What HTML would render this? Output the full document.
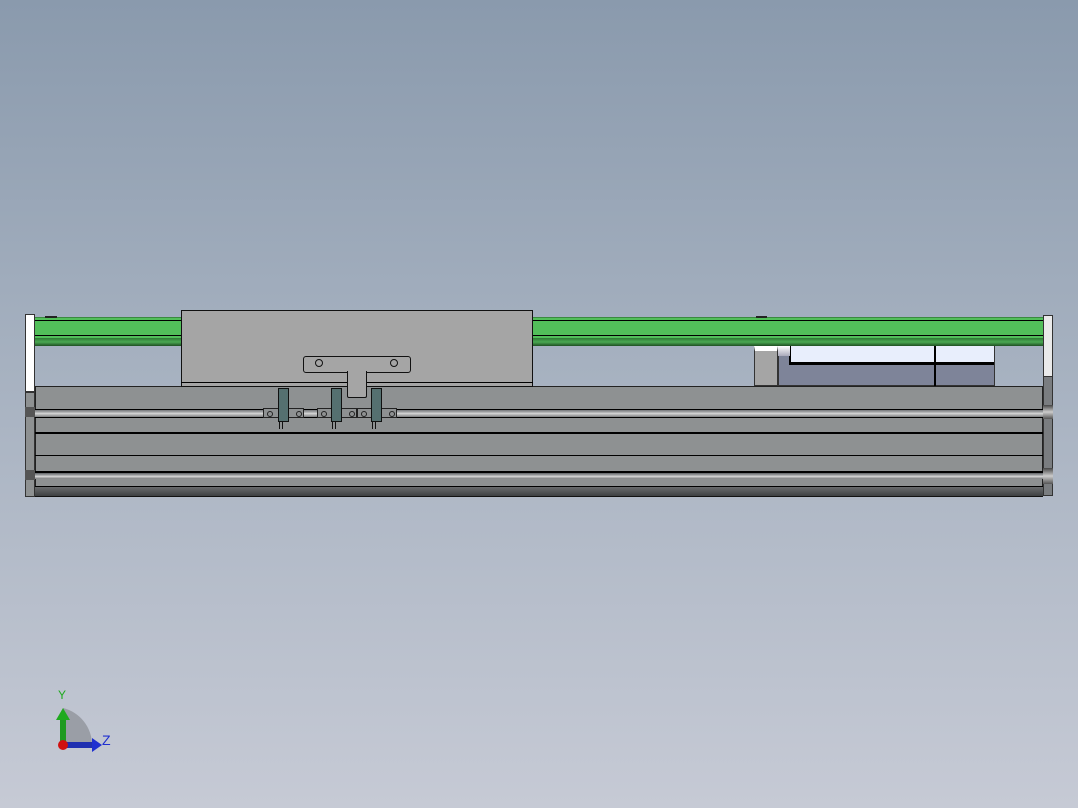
<!DOCTYPE html>
<html><head><style>
body{margin:0;width:1078px;height:808px;overflow:hidden;background:linear-gradient(#8a9aad 0%,#a6b1c0 45%,#c6cad5 100%);position:relative;font-family:"Liberation Sans",sans-serif}
div{position:absolute;box-sizing:border-box}
.l{background:#000;height:1px}
.g{background:linear-gradient(#5e6164,#a8aaac 40%,#d8d8d8 55%,#7a7c7e);}
.s{background:#557070;border:1px solid #111}
.h{width:6px;height:6px;border:1px solid #222;border-radius:50%;top:2px}
.st{background:#8e9192;border:1px solid #222;height:10px;top:408px}
</style></head><body>
<div style="left:25px;top:314px;width:10px;height:78px;background:#fff;border:1px solid #333"></div>
<div style="left:25px;top:392px;width:10px;height:105px;background:#8e9192;border:1px solid #333"></div>
<div style="left:25px;top:407px;width:10px;height:10px;background:#555"></div>
<div style="left:25px;top:470px;width:10px;height:10px;background:#555"></div>
<div style="left:1043px;top:315px;width:10px;height:76px;background:#eaeaea;border:1px solid #333"></div>
<div style="left:1043px;top:376px;width:10px;height:120px;background:#7a7d80;border:1px solid #333"></div>
<div style="left:1043px;top:405px;width:10px;height:14px;background:linear-gradient(#444,#ccc,#555)"></div>
<div style="left:1043px;top:468px;width:10px;height:16px;background:linear-gradient(#444,#ccc,#555)"></div>
<div style="left:35px;top:317px;width:1008px;height:29px;background:#52bf5a;border-top:1px solid #3a8a40"></div>
<div class="l" style="left:35px;top:320px;width:1008px"></div>
<div class="l" style="left:35px;top:335px;width:1008px"></div>
<div style="left:35px;top:338px;width:1008px;height:8px;background:linear-gradient(#2e7a34,#4aa852,#1f4f22)"></div>
<div style="left:45px;top:316px;width:12px;height:2px;background:#222"></div>
<div style="left:756px;top:316px;width:11px;height:2px;background:#222"></div>
<div style="left:754px;top:346px;width:24px;height:40px;background:#a5a5a5;border:1px solid #333;border-top:5px solid #fff"></div>
<div style="left:778px;top:346px;width:217px;height:40px;background:#7e8499;border:1px solid #333"></div>
<div style="left:789px;top:346px;width:205px;height:19px;background:#e8eefc;border-bottom:3px solid #000;border-left:2px solid #000"></div>
<div style="left:778px;top:346px;width:12px;height:10px;background:linear-gradient(#fff,#aab)"></div>
<div style="left:934px;top:346px;width:2px;height:40px;background:#000"></div>
<div style="left:35px;top:386px;width:1008px;height:111px;background:#8e9192;border:1px solid #222"></div>
<div class="g" style="left:35px;top:409px;width:1008px;height:8px"></div>
<div class="l" style="left:35px;top:409px;width:1008px"></div>
<div class="l" style="left:35px;top:417px;width:1008px"></div>
<div class="l" style="left:35px;top:432px;width:1008px;height:2px"></div>
<div class="l" style="left:35px;top:455px;width:1008px"></div>
<div class="l" style="left:35px;top:471px;width:1008px;height:2px"></div>
<div class="g" style="left:35px;top:473px;width:1008px;height:6px"></div>
<div class="l" style="left:35px;top:486px;width:1008px"></div>
<div style="left:35px;top:487px;width:1008px;height:10px;background:linear-gradient(#6a6c6e,#3e4042);border-bottom:1px solid #111"></div>
<div style="left:181px;top:310px;width:352px;height:77px;background:#a5a5a5;border:1px solid #111"></div>
<div class="l" style="left:181px;top:382px;width:352px"></div>
<div style="left:303px;top:356px;width:108px;height:17px;background:#a5a5a5;border:1px solid #111;border-radius:3px"></div>
<div style="left:347px;top:371px;width:20px;height:27px;background:#a5a5a5;border:1px solid #111;border-top:none;border-radius:0 0 2px 2px"></div>
<div style="left:348px;top:369px;width:18px;height:4px;background:#a5a5a5"></div>
<div style="left:315px;top:359px;width:8px;height:8px;border:1px solid #111;border-radius:50%"></div>
<div style="left:390px;top:359px;width:8px;height:8px;border:1px solid #111;border-radius:50%"></div>
<div class="st" style="left:263px;width:41px"><div class="h" style="left:3px"></div><div class="h" style="left:32px"></div></div>
<div class="st" style="left:317px;width:40px"><div class="h" style="left:3px"></div><div class="h" style="left:31px"></div></div>
<div class="st" style="left:357px;width:40px"><div class="h" style="left:3px"></div><div class="h" style="left:31px"></div></div>
<div class="s" style="left:278px;top:388px;width:11px;height:34px"></div>
<div class="s" style="left:331px;top:388px;width:11px;height:34px"></div>
<div class="s" style="left:371px;top:388px;width:11px;height:34px"></div>
<div style="left:279px;top:422px;width:4px;height:7px;border-left:1px solid #111;border-right:1px solid #111"></div>
<div style="left:332px;top:422px;width:4px;height:7px;border-left:1px solid #111;border-right:1px solid #111"></div>
<div style="left:372px;top:422px;width:4px;height:7px;border-left:1px solid #111;border-right:1px solid #111"></div>
<svg style="position:absolute;left:40px;top:680px" width="80" height="80">
<path d="M23 65 L23 28 A38 38 0 0 1 52 65 Z" fill="#9a9ea6"/>
<rect x="20" y="38" width="6" height="27" fill="#1f9a1f"/>
<polygon points="16,40 23,28 30,40" fill="#1faa1f"/>
<rect x="22" y="62" width="32" height="6" fill="#1f2fb0"/>
<polygon points="52,58 62,65 52,72" fill="#1f2fd0"/>
<circle cx="23" cy="65" r="5" fill="#d01010"/>
<text x="18" y="19" font-size="12" fill="#1faa1f">Y</text>
<text x="62" y="65" font-size="14" fill="#1f2fd0">Z</text>
</svg>
</body></html>
